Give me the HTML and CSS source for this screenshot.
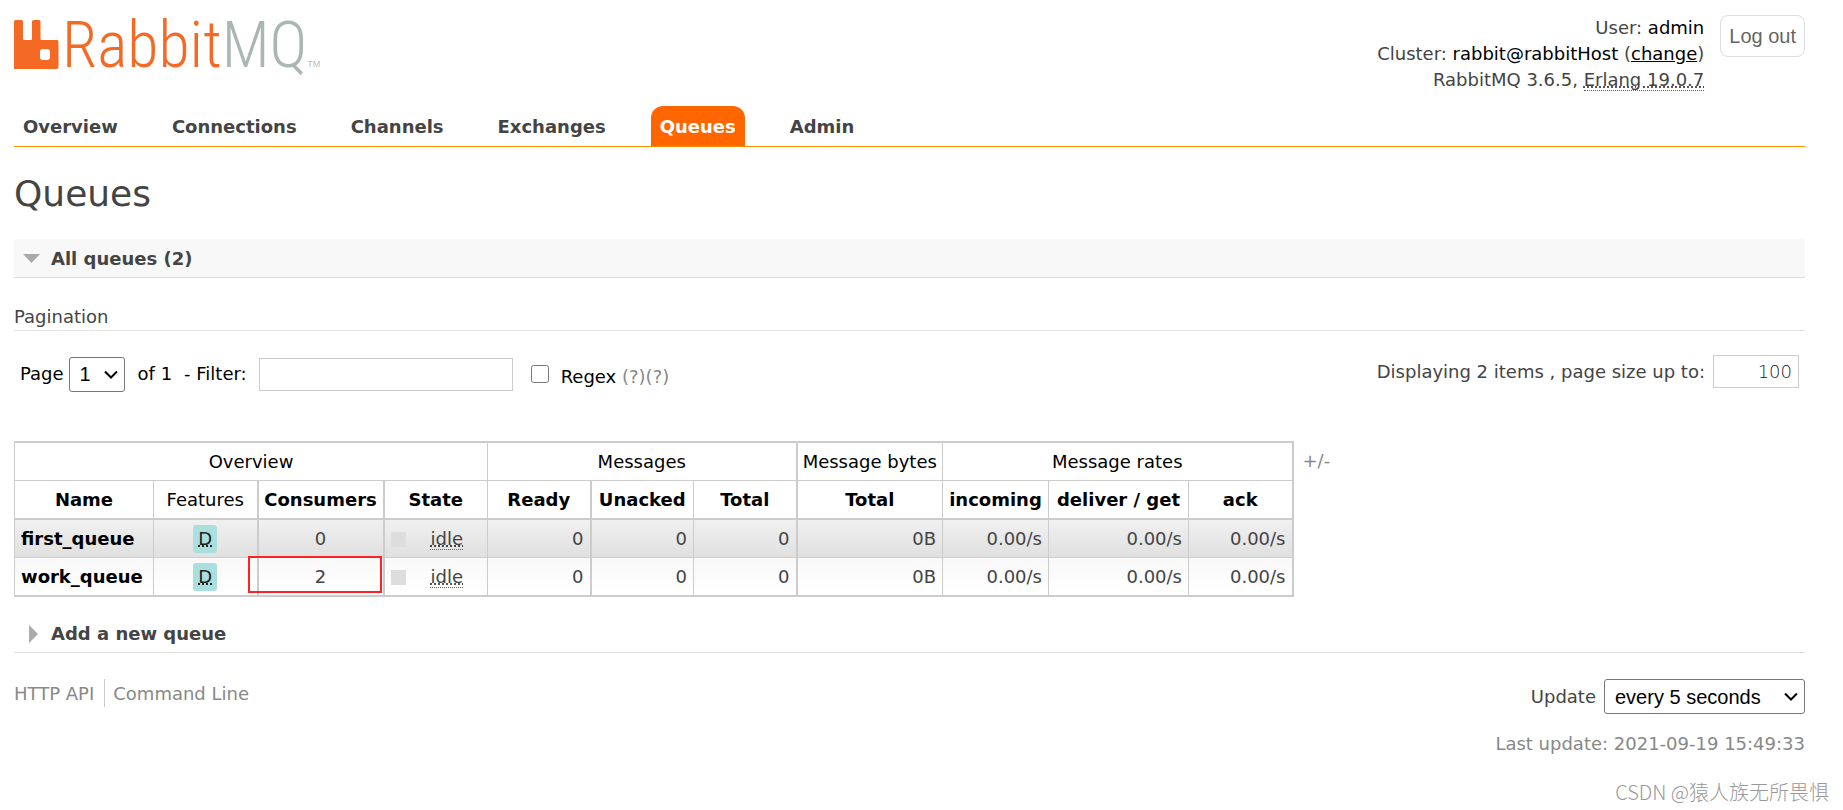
FILE: index.html
```html
<!DOCTYPE html>
<html lang="en">
<head>
<meta charset="utf-8">
<title>RabbitMQ Management</title>
<link rel="stylesheet" href="styles.css">
</head>
<body>
<header class="header">
  <a class="logo" href="#" aria-label="RabbitMQ">
    <svg class="logo-mark" width="45" height="50" viewBox="0 0 45 50" aria-hidden="true">
      <path fill="#f46a25" d="M0 1.5Q0 0 1.500 0H7.500Q9 0 9 1.500V18.500Q9 20 10.500 20H16.500Q18 20 18 18.500V1.500Q18 0 19.500 0H25Q26.500 0 26.500 1.500V18.500Q26.500 20 28 20H43Q44.500 20 44.500 21.500V47Q44.500 49 42.500 49H0Z"/>
      <rect fill="#fff" x="26" y="29" width="10" height="11" rx="3"/>
    </svg>
    <span class="logo-text">Rabbit<span class="logo-mq">MQ</span></span><span class="logo-tm">TM</span>
  </a>
  <div class="login">
    <ul class="info">
      <li>User: <b>admin</b></li>
      <li>Cluster: <b>rabbit@rabbitHost</b> (<a href="#">change</a>)</li>
      <li>RabbitMQ 3.6.5, <abbr title="Erlang/OTP 19">Erlang 19.0.7</abbr></li>
    </ul>
    <button class="logout" type="button">Log out</button>
  </div>
</header>
<nav class="tabs">
  <a href="#">Overview</a>
  <a href="#">Connections</a>
  <a href="#">Channels</a>
  <a href="#">Exchanges</a>
  <a class="selected" href="#">Queues</a>
  <a href="#">Admin</a>
</nav>
<main>
  <h1>Queues</h1>
  <h2 class="section open"><svg width="18" height="18" viewBox="0 0 18 18" aria-hidden="true"><path fill="#aaa" d="M0 4H17L8.500 13Z"/></svg>All queues (2)</h2>
  <h3>Pagination</h3>
  <div class="pager">
    <div class="filters">
      <label for="page">Page</label>
      <span class="pick"><select id="page" class="page"><option>1</option></select><svg class="chevron" width="14" height="9" viewBox="0 0 14 9" aria-hidden="true"><path d="M1 1.500L7 7.500L13 1.500"/></svg></span>
      <span class="total">of 1</span>
      <label class="filter-label" for="filter">- Filter:</label>
      <input id="filter" class="filter" type="text">
      <input id="regex" class="regex" type="checkbox">
      <span class="regex-label"><label for="regex">Regex</label> <a class="help" href="#">(?)</a><a class="help" href="#">(?)</a></span>
    </div>
    <div class="size">
      <label for="size">Displaying 2 items , page size up to:</label>
      <input id="size" type="text" value="100">
    </div>
  </div>
  <div class="list">
    <div class="table-wrap">
      <table>
        <colgroup><col class="name"><col class="stat"><col class="consumers"><col class="stat"><col class="count"><col class="count"><col class="count"><col class="bytes"><col class="incoming"><col class="deliver"><col class="stat"></colgroup>
        <thead>
          <tr><th colspan="4">Overview</th><th class="thick" colspan="3">Messages</th><th>Message bytes</th><th colspan="3">Message rates</th></tr>
          <tr class="sorts"><th>Name</th><th class="plain thick">Features</th><th class="thick">Consumers</th><th>State</th><th class="thick">Ready</th><th>Unacked</th><th class="thick">Total</th><th>Total</th><th>incoming</th><th>deliver / get</th><th>ack</th></tr>
        </thead>
        <tbody>
          <tr class="alt"><td class="queue"><a href="#">first_queue</a></td><td class="c thick"><abbr class="tag" title="durable">D</abbr></td><td class="c thick">0</td><td><div class="state"><i></i><abbr title="idle">idle</abbr></div></td><td class="thick">0</td><td>0</td><td class="thick">0</td><td>0B</td><td>0.00/s</td><td>0.00/s</td><td>0.00/s</td></tr>
          <tr><td class="queue"><a href="#">work_queue</a></td><td class="c thick"><abbr class="tag" title="durable">D</abbr></td><td class="c thick">2</td><td><div class="state"><i></i><abbr title="idle">idle</abbr></div></td><td class="thick">0</td><td>0</td><td class="thick">0</td><td>0B</td><td>0.00/s</td><td>0.00/s</td><td>0.00/s</td></tr>
        </tbody>
      </table>
      <div class="mark"></div>
    </div>
    <a class="columns" href="#">+/-</a>
  </div>
  <h2 class="section"><svg width="18" height="18" viewBox="0 0 18 18" aria-hidden="true"><path fill="#aaa" d="M6 0L15 9L6 18Z"/></svg>Add a new queue</h2>
</main>
<footer class="footer">
  <div class="links"><a href="#">HTTP API</a><a href="#">Command Line</a></div>
  <div class="status">
    <div class="update"><label for="every">Update</label>
      <span class="pick"><select id="every" class="every"><option>every 5 seconds</option></select><svg class="chevron" width="14" height="9" viewBox="0 0 14 9" aria-hidden="true"><path d="M1 1.500L7 7.500L13 1.500"/></svg></span>
    </div>
    <div class="last">Last update: 2021-09-19 15:49:33</div>
  </div>
</footer>
<div class="watermark">CSDN @猿人族无所畏惧</div>
</body>
</html>
```

FILE: styles.css
```css
* { box-sizing: border-box; }
body {
  margin: 0;
  padding: 0 38px 0 14px;
  min-height: 100vh;
  position: relative;
  background: #fff;
  color: #444;
  font: 18px/26px Verdana, "DejaVu Sans", sans-serif;
}
a { color: inherit; }
input, select, button { margin: 0; font-family: Arial, "Liberation Sans", sans-serif; font-size: 20px; }

.header { display: flex; justify-content: space-between; height: 106px; }
.logo { display: flex; padding-top: 20px; text-decoration: none; }
.logo-text {
  margin: -1px 0 0 3px;
  color: #f46a25;
  font: 300 64px/54px "Roboto Condensed", "Liberation Sans Narrow", sans-serif;
}
.logo-mq { color: #a9b6b1; }
.logo-tm { align-self: flex-start; padding-top: 38px; color: #bbb; font: 9px/12px "Liberation Sans", sans-serif; }

.login { display: flex; align-items: flex-start; gap: 16px; padding-top: 15px; }
.info { margin: 0; padding: 0; list-style: none; text-align: right; }
.info b { color: #000; font-weight: normal; }
.info a { color: #000; }
abbr { text-decoration: underline dotted; border-bottom: 1px dotted #666; }
.logout {
  height: 42px;
  padding: 0 8px;
  border: 1px solid #ddd;
  border-radius: 8px;
  background: #fff;
  color: #666;
}

.tabs { display: flex; gap: 36px; border-bottom: 1px solid #ff8f00; }
.tabs a { padding: 8px 9px 6px; color: #444; font-weight: bold; text-decoration: none; }
.tabs .selected { border-radius: 12px 12px 0 0; background: #f60; color: #fff; }

h1 { margin: 25px 0 23px; font-size: 36px; line-height: 44px; font-weight: normal; }
.section {
  display: flex;
  align-items: center;
  gap: 10px;
  margin: 0;
  padding: 7px 9px 5px;
  border-bottom: 1px solid #ddd;
  font-size: 18px;
}
.section.open { background: #f8f8f8; }
h3 { margin: 26px 0 0; border-bottom: 1px solid #e4e4e4; font-size: 18px; font-weight: normal; }

.pager { display: flex; justify-content: space-between; align-items: flex-start; padding: 24px 6px 0; }
.filters { display: flex; align-items: center; height: 38px; color: #000; }
.pick { position: relative; display: inline-flex; }
.pick select { height: 35px; border: 1px solid #767676; border-radius: 3px; background: #fff; color: #000; appearance: none; }
.chevron { position: absolute; right: 7px; top: 13px; fill: none; stroke: #000; stroke-width: 2px; pointer-events: none; }
.page { width: 56px; padding: 0 10px; }
.filters .pick { margin: 0 13px 0 5px; }
.filter-label { margin: 0 12px; }
.filter { width: 254px; height: 33px; border: 1px solid #ccc; }
.regex { width: 18px; height: 18px; margin: 0 12px 0 18px; }
.regex-label { padding-top: 6px; }
.help { color: #888; text-decoration: none; }
.size { display: flex; align-items: center; gap: 8px; }
.size input {
  width: 86px;
  height: 33px;
  padding: 0 6px;
  border: 1px solid #ccc;
  color: #222;
  font: 200 18px/26px "DejaVu Sans", sans-serif;
  text-align: right;
}

.list { display: flex; align-items: flex-start; padding: 48px 0 17px; }
.table-wrap { position: relative; }
table { border-collapse: collapse; border: 2px solid #ccc; border-left-width: 1px; }
.name { width: 139px; }
.stat { width: 104px; }
.count { width: 103px; }
.consumers { width: 126px; }
.bytes { width: 146px; }
.incoming { width: 106px; }
.deliver { width: 140px; }
th, td { padding: 6px 4px 5px; border: 1px solid #ccc; white-space: nowrap; }
th { color: #000; font-weight: normal; text-align: center; }
.sorts th { border-bottom-width: 2px; font-weight: bold; }
.sorts .plain { font-weight: normal; }
td { padding: 6px 6px 5px; text-align: right; background: linear-gradient(#f8f8f8, #fff); }
.alt td { background: linear-gradient(#f0f0f0, #e0e0e0); }
.thick, .sorts .thick { border-right-width: 2px; }
.c { text-align: center; }
.queue { text-align: left; }
.queue a { color: #000; font-weight: bold; text-decoration: none; }
.tag { display: inline-block; padding: 1px 5px; border: 0; border-radius: 3px; background: #aadfde; color: #222; }
.c .tag { margin: -1px 0; }
.state { display: flex; align-items: center; justify-content: space-between; padding-right: 18px; }
.state i { width: 15px; height: 15px; background: #ddd; }
.state abbr { line-height: 20px; }
.mark { position: absolute; left: 234px; bottom: 4px; width: 134px; height: 37px; border: 2px solid #f22; }
.columns { padding: 7px 9px; color: #888; text-decoration: none; }

.footer { display: flex; justify-content: space-between; align-items: flex-start; padding-top: 26px; }
.links { display: flex; color: #888; }
.links a { height: 28px; text-decoration: none; line-height: 30px; }
.links a + a { margin-left: 10px; padding-left: 8px; border-left: 1px solid #ccc; }
.status { text-align: right; }
.update { display: flex; align-items: center; justify-content: flex-end; gap: 8px; }
.every { width: 201px; padding: 0 10px; }
.last { padding-top: 17px; color: #888; }
.watermark {
  position: absolute;
  right: 14px;
  bottom: 4px;
  color: #999;
  font: 300 20px/28px "Noto Sans CJK SC", sans-serif;
}
```
